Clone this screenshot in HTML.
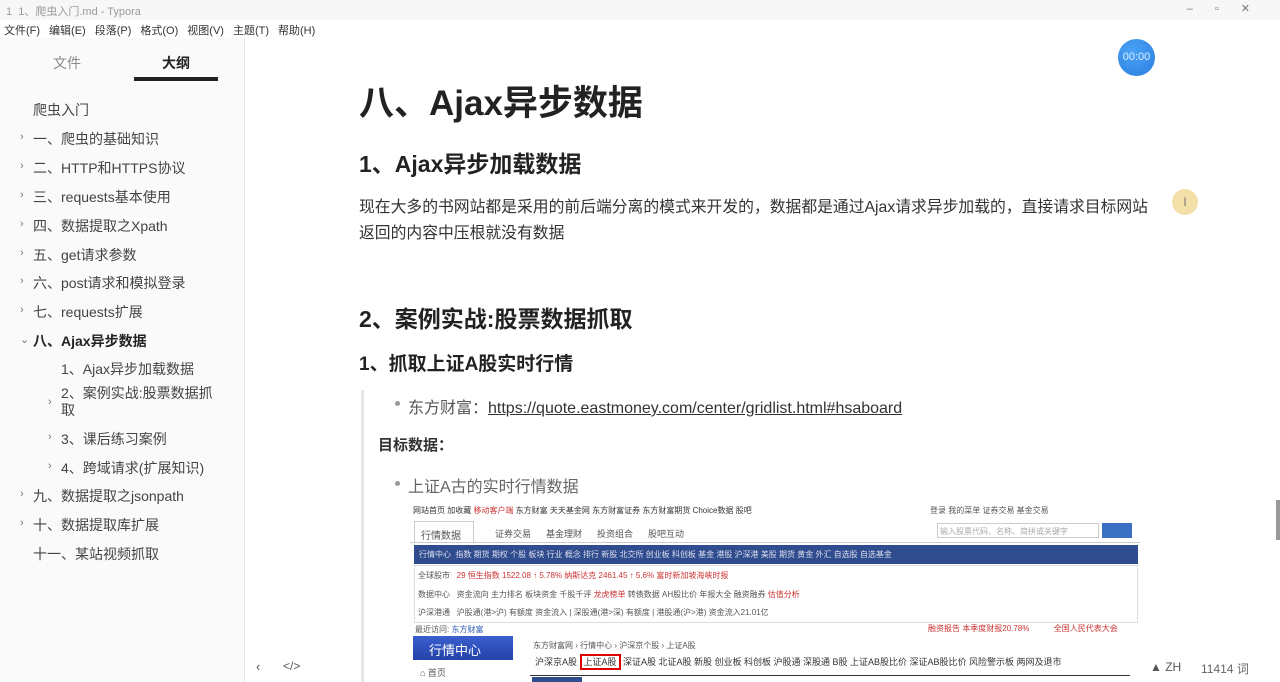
<!DOCTYPE html>
<html><head><meta charset="utf-8"><style>
*{margin:0;padding:0;box-sizing:border-box}
body{width:1280px;height:682px;overflow:hidden;background:#fff;font-family:"Liberation Sans","Noto Sans CJK SC",sans-serif;color:#333;position:relative}
.abs{position:absolute;white-space:nowrap}
#title{left:0;top:0;width:1280px;height:20px;background:#f7f7f7;font-size:11px;color:#999;padding:3px 6px}
#menu{left:0;top:20px;width:1280px;height:18px;font-size:11px;color:#333;padding:2px 4px;background:#fff}
#menu span{margin-right:9px}
#side{left:0;top:38px;width:245px;height:644px;background:#fafafa;border-right:1px solid #e8e8e8}
.si{position:absolute;font-size:14px;color:#444;white-space:nowrap}
.ar{position:absolute;font-size:11px;color:#777}
h1,h2,h3{position:absolute;white-space:nowrap;color:#222;font-weight:bold}
.p{position:absolute;font-size:15px;color:#333;white-space:nowrap}
.img{left:410px;top:503px;width:730px;height:179px;background:#fff;font-size:8px;color:#555}
.bar{position:absolute;background:#2f4d8e}
</style></head><body>
<div class="abs" id="title">1 &nbsp;1、爬虫入门.md - Typora</div>
<div class="abs" style="right:8px;top:2px;font-size:11px;color:#777;letter-spacing:22px">‒▫✕</div>
<div class="abs" id="menu"><span>文件(F)</span><span>编辑(E)</span><span>段落(P)</span><span>格式(O)</span><span>视图(V)</span><span>主题(T)</span><span>帮助(H)</span></div>
<div class="abs" id="side">
<div class="si" style="left:53px;top:15px;color:#888">文件</div>
<div class="si" style="left:162px;top:15px;font-weight:bold;color:#222">大纲</div>
<div class="abs" style="left:134px;top:39px;width:84px;height:4px;background:#222"></div>
<div class="si" style="left:33px;top:62px">爬虫入门</div>
<div class="ar" style="left:20px;top:93px">›</div><div class="si" style="left:33px;top:91px">一、爬虫的基础知识</div>
<div class="ar" style="left:20px;top:122px">›</div><div class="si" style="left:33px;top:120px">二、HTTP和HTTPS协议</div>
<div class="ar" style="left:20px;top:151px">›</div><div class="si" style="left:33px;top:149px">三、requests基本使用</div>
<div class="ar" style="left:20px;top:180px">›</div><div class="si" style="left:33px;top:178px">四、数据提取之Xpath</div>
<div class="ar" style="left:20px;top:209px">›</div><div class="si" style="left:33px;top:207px">五、get请求参数</div>
<div class="ar" style="left:20px;top:237px">›</div><div class="si" style="left:33px;top:235px">六、post请求和模拟登录</div>
<div class="ar" style="left:20px;top:266px">›</div><div class="si" style="left:33px;top:264px">七、requests扩展</div>
<div class="ar" style="left:20px;top:295px">⌄</div><div class="si" style="left:33px;top:293px;font-weight:bold;color:#222">八、Ajax异步数据</div>
<div class="si" style="left:61px;top:321px">1、Ajax异步加载数据</div>
<div class="ar" style="left:48px;top:358px">›</div><div class="si" style="left:61px;top:347px;line-height:17px">2、案例实战:股票数据抓<br>取</div>
<div class="ar" style="left:48px;top:393px">›</div><div class="si" style="left:61px;top:391px">3、课后练习案例</div>
<div class="ar" style="left:48px;top:422px">›</div><div class="si" style="left:61px;top:420px">4、跨域请求(扩展知识)</div>
<div class="ar" style="left:20px;top:450px">›</div><div class="si" style="left:33px;top:448px">九、数据提取之jsonpath</div>
<div class="ar" style="left:20px;top:479px">›</div><div class="si" style="left:33px;top:477px">十、数据提取库扩展</div>
<div class="si" style="left:33px;top:506px">十一、某站视频抓取</div>
<div class="si" style="left:256px;top:621px;font-size:13px;color:#555">‹</div>
<div class="si" style="left:283px;top:621px;font-size:12px;color:#555">&lt;/&gt;</div>
</div>
<div class="abs" style="left:1118px;top:39px;width:37px;height:37px;border-radius:50%;background:radial-gradient(circle at 40% 35%,#4aa3f5,#2b7de0);color:#dfefff;font-size:11px;line-height:37px;text-align:center">00:00</div>
<h1 style="left:359px;top:75px;font-size:35px">八、Ajax异步数据</h1>
<h2 style="left:359px;top:145px;font-size:23px">1、Ajax异步加载数据</h2>
<div class="p" style="left:359px;top:194px;font-size:15.8px">现在大多的书网站都是采用的前后端分离的模式来开发的，数据都是通过Ajax请求异步加载的，直接请求目标网站</div>
<div class="p" style="left:359px;top:220px;font-size:15.8px">返回的内容中压根就没有数据</div>
<div class="abs" style="left:1172px;top:189px;width:26px;height:26px;border-radius:50%;background:#f3dfa8;font-size:12px;color:#777;text-align:center;line-height:26px">I</div>
<h2 style="left:359px;top:300px;font-size:23px">2、案例实战:股票数据抓取</h2>
<h3 style="left:359px;top:349px;font-size:19px">1、抓取上证A股实时行情</h3>
<div class="abs" style="left:361px;top:390px;width:3px;height:292px;background:#e5e5e5"></div>
<div class="abs" style="left:395px;top:401px;width:5px;height:5px;border-radius:50%;background:#999"></div>
<div class="p" style="left:408px;top:394px;font-size:16px;color:#555">东方财富：<span style="text-decoration:underline;color:#333">https://quote.eastmoney.com/center/gridlist.html#hsaboard</span></div>
<div class="p" style="left:378px;top:434px;font-weight:bold;font-size:15px">目标数据：</div>
<div class="abs" style="left:395px;top:481px;width:5px;height:5px;border-radius:50%;background:#999"></div>
<div class="p" style="left:408px;top:473px;font-size:16px;color:#666">上证A古的实时行情数据</div>
<div class="abs img">
<div class="abs" style="left:3px;top:2px;color:#333">网站首页 加收藏 <span style="color:#c33">移动客户端</span> 东方财富 天天基金网 东方财富证券 东方财富期货 Choice数据 股吧</div>
<div class="abs" style="left:520px;top:2px">登录 我的菜单 证券交易 基金交易</div>
<div class="abs" style="left:0;top:18px;width:730px;height:22px;border-bottom:1px solid #ccc"></div>
<div class="abs" style="left:4px;top:18px;width:60px;height:22px;border:1px solid #ccc;border-bottom:none;font-size:10px;padding:5px 6px">行情数据</div>
<div class="abs" style="left:85px;top:24px;font-size:9px">证券交易 &nbsp;&nbsp;&nbsp;&nbsp; 基金理财 &nbsp;&nbsp;&nbsp;&nbsp; 投资组合 &nbsp;&nbsp;&nbsp;&nbsp; 股吧互动</div>
<div class="abs" style="left:527px;top:20px;width:162px;height:15px;border:1px solid #ccc;color:#aaa;padding:2px">输入股票代码、名称、简拼或关键字</div>
<div class="abs" style="left:692px;top:20px;width:30px;height:15px;background:#3b6fc2"></div>
<div class="bar" style="left:4px;top:42px;width:724px;height:19px;color:#dde;padding:4px 5px">行情中心 &nbsp;指数 期货 期权 个股 板块 行业 概念 排行 新股 北交所 创业板 科创板 基金 港股 沪深港 美股 期货 黄金 外汇 自选股 自选基金</div>
<div class="abs" style="left:4px;top:62px;width:724px;height:58px;border:1px solid #ddd"></div>
<div class="abs" style="left:8px;top:67px">全球股市 <span style="color:#c33">&nbsp;&nbsp;29 恒生指数 1522.08 ↑ 5.78% 纳斯达克 2461.45 ↑ 5.6% 富时新加坡海峡时报</span></div>
<div class="abs" style="left:8px;top:86px">数据中心 &nbsp;&nbsp;资金流向 主力排名 板块资金 千股千评 <span style="color:#c33">龙虎榜单</span> 转债数据 AH股比价 年报大全 融资融券 <span style="color:#c33">估值分析</span></div>
<div class="abs" style="left:8px;top:104px">沪深港通 &nbsp;&nbsp;沪股通(港&gt;沪) 有额度 资金流入 | 深股通(港&gt;深) 有额度 | 港股通(沪&gt;港) 资金流入21.01亿</div>
<div class="abs" style="left:5px;top:121px">最近访问: <span style="color:#2d5bb5">东方财富</span></div>
<div class="abs" style="left:518px;top:120px;color:#c33">融资报告 本季度财报20.78% &nbsp;&nbsp;&nbsp;&nbsp;&nbsp;&nbsp;&nbsp;&nbsp;&nbsp; 全国人民代表大会</div>
<div class="abs" style="left:3px;top:133px;width:100px;height:24px;background:linear-gradient(#3a5fcf,#2443a8);color:#fff;font-size:13px;padding:4px 16px">行情中心</div>
<div class="abs" style="left:123px;top:137px">东方财富网 › 行情中心 › 沪深京个股 › 上证A股</div>
<div class="abs" style="left:125px;top:152px;font-size:9px;color:#333">沪深京A股 <span style="border:2px solid #d00;padding:1px 2px">上证A股</span> 深证A股 北证A股 新股 创业板 科创板 沪股通 深股通 B股 上证AB股比价 深证AB股比价 风险警示板 两网及退市</div>
<div class="abs" style="left:10px;top:163px;font-size:9px">⌂ 首页</div>
<div class="abs" style="left:120px;top:172px;width:600px;height:7px;border-top:1px solid #333"></div>
<div class="abs" style="left:122px;top:174px;width:50px;height:5px;background:#2f4d8e"></div>
</div>
<div class="abs" style="left:1276px;top:500px;width:4px;height:40px;background:#999"></div>
<div class="abs" style="left:1150px;top:660px;font-size:12px;color:#555">▲ ZH</div>
<div class="abs" style="left:1201px;top:660px;font-size:12px;color:#666">11414 词</div>
</body></html>
